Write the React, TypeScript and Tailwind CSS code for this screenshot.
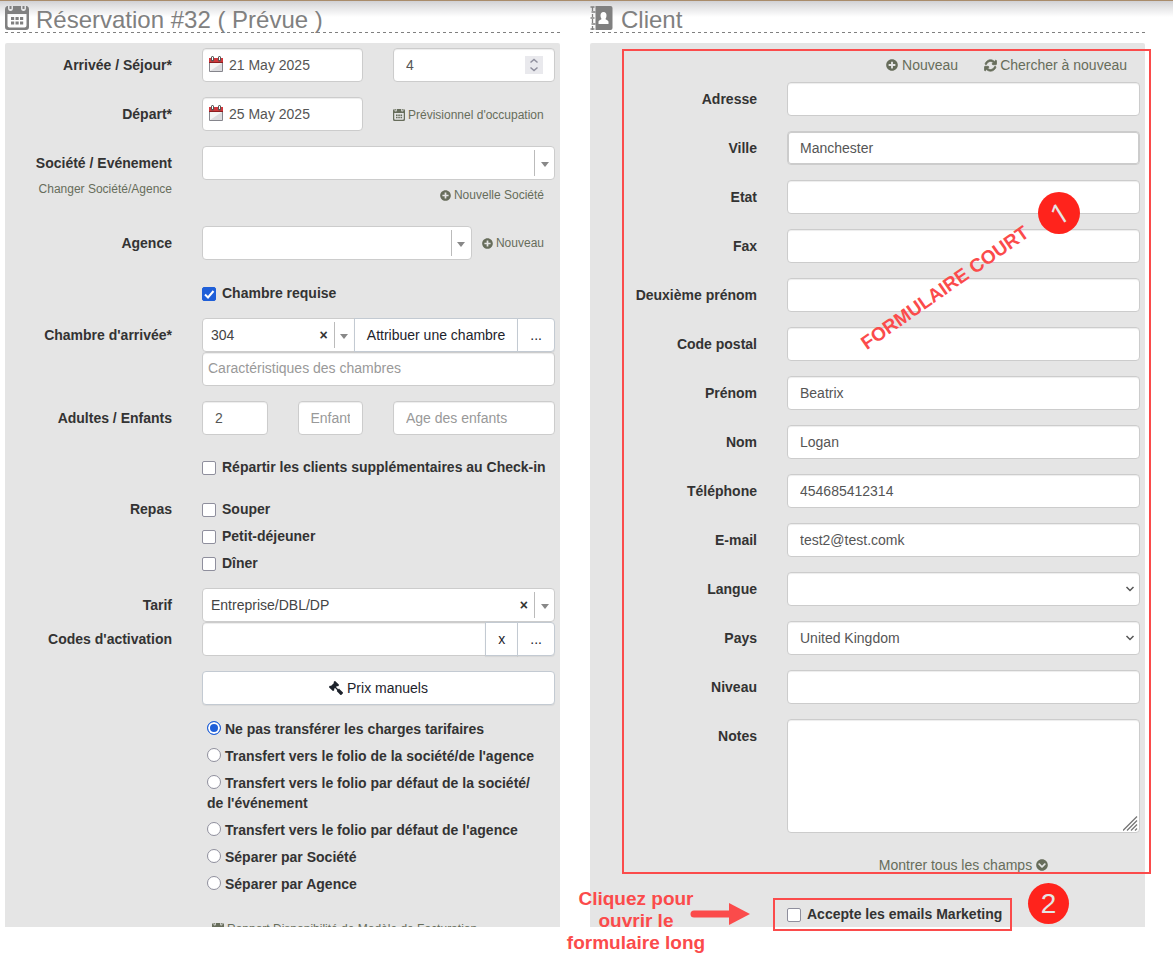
import { useState, type ReactNode } from "react";
import { FaGavel, FaPlusCircle, FaChevronCircleDown } from "react-icons/fa";
import { FaArrowsRotate } from "react-icons/fa6";

const inputBox =
  "h-[34px] w-full min-w-0 rounded border border-[#ccc] bg-white px-3 text-sm text-[#555] shadow-[inset_0_1px_1px_rgba(0,0,0,0.075)] outline-none placeholder:text-[#999]";
const linkStyle = "text-[#676d5b] hover:underline";
const buttonStyle =
  "h-[34px] shrink-0 border border-[#c3cad2] bg-white px-3 text-sm text-[#1d232c] shadow-[0_1px_1px_rgba(0,0,0,0.06)] hover:bg-gray-50";

function CalendarIcon({ className }: { className?: string }) {
  return (
    <svg viewBox="0 0 24 24" className={className} fill="currentColor" aria-hidden="true">
      <path
        fillRule="evenodd"
        d="M0 3q0-2 2-3h1v2q0 3 2.500 3t2.500-3V0h8v2q0 3 2.500 3T21 2V0h1q2 1 2 3v18q0 3-3 3H3q-3 0-3-3zM2.500 8v11.500q0 2 2 2h15q2 0 2-2V8z"
      />
      <path d="M4.500 0h2v3h-2zM17.500 0h2v3h-2z" />
      <path d="M6 11h3.200v3H6zM10.500 11h3.200v3h-3.200zM15 11h3.200v3H15zM6 15.500h3.200v3H6zM10.500 15.500h3.200v3h-3.200zM15 15.500h3.200v3H15z" />
    </svg>
  );
}

function AddressBookIcon({ className }: { className?: string }) {
  return (
    <svg viewBox="0 0 22 24" className={className} aria-hidden="true">
      <path d="M5 0h15q2 0 2 2v20q0 2-2 2H5z" fill="#808080" />
      <path
        d="M2 1v4M2 8v3M2 13v4M2 20v4M0 1h4M1 6h4M0 12h4M1 18h4M0 23h4"
        stroke="#808080"
        strokeWidth="1.300"
        fill="none"
      />
      <path
        d="M13 6c2 0 3 1.500 3 3.500 0 1.500-.5 2.500-1 3.300 0 1.200 3 1.200 3 3.200v2H8v-2c0-2 3-2 3-3.200-.5-.8-1-1.800-1-3.300C10 7.500 11 6 13 6z"
        fill="#fff"
      />
    </svg>
  );
}

function DatePickerIcon() {
  return (
    <svg viewBox="0 0 14 18" className="h-[18px] w-3.5 shrink-0" aria-hidden="true">
      <path d="M.5 6.500h13v9H.5z" fill="#f5f5f5" stroke="#85858c" />
      <path d="M1 15L13 7v8z" fill="#dcdcdf" />
      <path d="M0 2h14v5H0z" fill="#d0393d" />
      <path d="M0 6h14v1H0z" fill="#8d1d20" />
      <path d="M3.500 4V1.500M10.500 4V1.500" stroke="#555" strokeWidth="3" strokeLinecap="round" />
      <path d="M3.500 4V1M10.500 4V1" stroke="#fff" strokeWidth="1" />
    </svg>
  );
}

function Row({ label, htmlFor, children }: { label?: ReactNode; htmlFor?: string; children: ReactNode }) {
  return (
    <div className="grid grid-cols-[167px_minmax(0,1fr)] gap-x-[30px] pr-[5px]">
      <div className="pt-[7px] text-right leading-5">
        {label && (
          <label htmlFor={htmlFor} className="font-bold">
            {label}
          </label>
        )}
      </div>
      <div className="min-w-0">{children}</div>
    </div>
  );
}

function DateInput({ id, value }: { id: string; value: string }) {
  return (
    <div className={`${inputBox} flex items-center gap-1.5 px-1.5!`}>
      <DatePickerIcon />
      <input id={id} defaultValue={value} className="w-full min-w-0 outline-none" />
    </div>
  );
}

interface ComboProps {
  id: string;
  value?: string;
  className?: string;
}

function Combo({ id, value = "", className = "" }: ComboProps) {
  const [selected, setSelected] = useState(value);

  return (
    <div className={`flex h-[34px] min-w-0 items-center rounded border border-[#ccc] bg-white ${className}`}>
      <select
        id={id}
        value={selected}
        onChange={(e) => setSelected(e.target.value)}
        className="h-8 min-w-0 flex-1 appearance-none pl-2 text-[#444] outline-none"
      >
        <option value=""></option>
        {value && <option value={value}>{value}</option>}
      </select>
      {selected && (
        <button type="button" aria-label="Effacer" onClick={() => setSelected("")} className="px-1.5 font-bold text-[#333]">
          ×
        </button>
      )}
      <div className="flex h-[26px] w-5 items-center justify-center border-l border-[#bbb] pt-0.5">
        <svg viewBox="0 0 8 5" className="h-[5px] w-2" aria-hidden="true">
          <path d="M0 0h8L4 5z" fill="#888" />
        </svg>
      </div>
    </div>
  );
}

function CheckMark({ id, label, checked = false }: { id: string; label: string; checked?: boolean }) {
  return (
    <div className="flex items-center gap-1.5 leading-5">
      <span className="grid pt-0.5">
        <input
          id={id}
          type="checkbox"
          defaultChecked={checked}
          className="peer col-start-1 row-start-1 size-3.5 appearance-none rounded-xs border border-[#8f8f9d] bg-white checked:border-[#1f5fd8] checked:bg-[#1f5fd8]"
        />
        <svg
          viewBox="0 0 14 14"
          className="pointer-events-none col-start-1 row-start-1 hidden size-3.5 peer-checked:block"
          aria-hidden="true"
        >
          <path d="M3 7.500L6 10.500L11.500 4" fill="none" stroke="#fff" strokeWidth="2" />
        </svg>
      </span>
      <label htmlFor={id} className="font-bold">
        {label}
      </label>
    </div>
  );
}

const transferOptions = [
  "Ne pas transférer les charges tarifaires",
  "Transfert vers le folio de la société/de l'agence",
  "Transfert vers le folio par défaut de la société/ de l'événement",
  "Transfert vers le folio par défaut de l'agence",
  "Séparer par Société",
  "Séparer par Agence",
];

const clientFields = [
  { id: "adresse", label: "Adresse", value: "" },
  { id: "ville", label: "Ville", value: "Manchester", active: true },
  { id: "etat", label: "Etat", value: "" },
  { id: "fax", label: "Fax", value: "" },
  { id: "deuxieme", label: "Deuxième prénom", value: "" },
  { id: "postal", label: "Code postal", value: "" },
  { id: "prenom", label: "Prénom", value: "Beatrix" },
  { id: "nom", label: "Nom", value: "Logan" },
  { id: "telephone", label: "Téléphone", value: "454685412314" },
  { id: "email", label: "E-mail", value: "test2@test.comk" },
];

function Title({ icon, children }: { icon: ReactNode; children: ReactNode }) {
  return (
    <h2 className="mb-2.5 flex h-7 items-start gap-[7px] bg-[repeating-linear-gradient(90deg,#808080_0_3px,transparent_3px_6px)] bg-[length:100%_1px] bg-bottom bg-no-repeat text-2xl leading-[30px] text-[#808080]">
      {icon}
      <span>{children}</span>
    </h2>
  );
}

function ClientSelect({ id, value }: { id: string; value: string }) {
  return (
    <div className={`${inputBox} flex items-center px-0!`}>
      <select id={id} defaultValue={value} className="h-8 w-full appearance-none pl-3 outline-none">
        <option value={value}>{value}</option>
      </select>
      <svg viewBox="0 0 10 6" className="mr-1 h-1.5 w-2.5 shrink-0" aria-hidden="true">
        <path d="M1.500 1L5 4.500 8.500 1" fill="none" stroke="#555" strokeWidth="1.500" />
      </svg>
    </div>
  );
}

function Reservation() {
  return (
    <section>
      <Title icon={<CalendarIcon className="mt-px size-6" />}>Réservation #32 ( Prévue )</Title>
      <form className="rounded-t-xs bg-[#e5e5e5] pt-[5px]">
        <div className="flex flex-col gap-[15px]">
          <Row label="Arrivée / Séjour*" htmlFor="arrivee">
            <div className="grid grid-cols-[161fr_162fr] gap-[30px]">
              <DateInput id="arrivee" value="21 May 2025" />
              <div className={`${inputBox} flex items-center px-[11px]!`}>
                <input aria-label="Séjour" defaultValue="4" className="w-full min-w-0 pl-px outline-none" />
                <svg viewBox="0 0 18 18" className="size-[18px] shrink-0" aria-hidden="true">
                  <path d="M0 0h18v18H0z" fill="#e9e9ed" />
                  <path d="M5.500 6.500L9 3.500l3.500 3M5.500 11.500L9 14.500l3.500-3" fill="none" stroke="#8f8f9d" strokeWidth="1.500" />
                </svg>
              </div>
            </div>
          </Row>
          <Row label="Départ*" htmlFor="depart">
            <div className="grid grid-cols-[161fr_162fr] items-center gap-[30px]">
              <DateInput id="depart" value="25 May 2025" />
              <a href="#" className={`${linkStyle} flex items-center gap-[3px] pt-px text-xs whitespace-nowrap`}>
                <CalendarIcon className="size-3" />
                Prévisionnel d'occupation
              </a>
            </div>
          </Row>
        </div>

        <div className="mt-[15px] grid grid-cols-[167px_minmax(0,1fr)] gap-x-[30px] pr-[5px]">
          <div className="pt-[7px] text-right leading-5">
            <label htmlFor="societe" className="block font-bold">
              Société / Evénement
            </label>
            <a href="#" className={`${linkStyle} mt-1.5 block text-xs leading-5`}>
              Changer Société/Agence
            </a>
          </div>
          <div>
            <Combo id="societe" />
            <a href="#" className={`${linkStyle} mt-[5px] flex items-center justify-end gap-[3px] pr-[11px] text-xs leading-5`}>
              <FaPlusCircle className="size-[11px]" />
              Nouvelle Société
            </a>
          </div>
        </div>

        <div className="mt-[21px]">
          <Row label="Agence" htmlFor="agence">
            <div className="flex items-center gap-2.5">
              <Combo id="agence" className="flex-1" />
              <a href="#" className={`${linkStyle} flex items-center gap-[3px] pr-[11px] text-xs`}>
                <FaPlusCircle className="size-[11px]" />
                Nouveau
              </a>
            </div>
          </Row>
        </div>

        <div className="mt-[23px]">
          <Row>
            <CheckMark id="requise" label="Chambre requise" checked />
          </Row>
        </div>

        <div className="mt-[15px]">
          <Row label="Chambre d'arrivée*" htmlFor="chambre">
            <div className="flex">
              <Combo id="chambre" value="304" className="flex-1 rounded-r-none" />
              <button type="button" className={`${buttonStyle} -ml-px`}>
                Attribuer une chambre
              </button>
              <button type="button" className={`${buttonStyle} -ml-px rounded-r`}>
                ...
              </button>
            </div>
            <input
              aria-label="Caractéristiques des chambres"
              placeholder="Caractéristiques des chambres"
              className={`${inputBox} px-[5px]! pb-0.5`}
            />
          </Row>
        </div>

        <div className="mt-[15px]">
          <Row label="Adultes / Enfants" htmlFor="adultes">
            <div className="grid grid-cols-[161fr_162fr] gap-[30px]">
              <div className="grid grid-cols-2 gap-[30px]">
                <input id="adultes" defaultValue="2" className={inputBox} />
                <input aria-label="Enfants" placeholder="Enfants" className={inputBox} />
              </div>
              <input aria-label="Age des enfants" placeholder="Age des enfants" className={inputBox} />
            </div>
          </Row>
        </div>

        <div className="mt-[22px]">
          <Row>
            <CheckMark id="repartir" label="Répartir les clients supplémentaires au Check-in" />
          </Row>
        </div>

        <div className="mt-[15px]">
          <Row label="Repas">
            <div className="flex flex-col gap-[7px] pt-[7px]">
              <CheckMark id="souper" label="Souper" />
              <CheckMark id="petit-dejeuner" label="Petit-déjeuner" />
              <CheckMark id="diner" label="Dîner" />
            </div>
          </Row>
        </div>

        <div className="mt-[15px]">
          <Row label="Tarif" htmlFor="tarif">
            <Combo id="tarif" value="Entreprise/DBL/DP" />
          </Row>
          <Row label="Codes d'activation" htmlFor="codes">
            <div className="flex">
              <input id="codes" className={`${inputBox} rounded-r-none`} />
              <button type="button" className={`${buttonStyle} -ml-px`}>
                x
              </button>
              <button type="button" className={`${buttonStyle} -ml-px rounded-r`}>
                ...
              </button>
            </div>
          </Row>
        </div>

        <div className="mt-[15px]">
          <Row>
            <button type="button" className={`${buttonStyle} flex w-full items-center justify-center gap-1 rounded`}>
              <FaGavel className="size-3.5 -scale-x-100" />
              Prix manuels
            </button>
          </Row>
        </div>

        <div className="mt-[7px]">
          <Row>
            <div className="pr-2 pl-[5px]">
              {transferOptions.map((option, idx) => (
                <label key={option} className="block pt-[7px] leading-5 font-bold">
                  <input
                    type="radio"
                    name="transfert"
                    defaultChecked={idx === 0}
                    className="mr-1 size-3.5 appearance-none rounded-full border border-[#8f8f9d] bg-white align-[-1px] checked:border-[#1f5fd8] checked:bg-[#1f5fd8] checked:shadow-[inset_0_0_0_2px_#fff]"
                  />
                  {option}
                </label>
              ))}
            </div>
          </Row>
        </div>

        <div className="mt-6 h-[9px] overflow-hidden">
          <div className="grid grid-cols-[167px_minmax(0,1fr)] gap-x-[30px]">
            <span className="pt-1.5 text-right leading-5 font-bold">Catégories</span>
            <a href="#" className={`${linkStyle} flex h-[22px] items-center gap-[3px] pl-2.5 text-xs`}>
              <CalendarIcon className="size-3" />
              Rapport Disponibilité de Modèle de Facturation
            </a>
          </div>
        </div>
      </form>
    </section>
  );
}

function Client() {
  return (
    <section>
      <Title icon={<AddressBookIcon className="mt-px mr-px h-6 w-[23px]" />}>Client</Title>
      <div className="relative">
        <form className="rounded-t-xs bg-[#e5e5e5] pt-3 pb-[3px]">
          <div className="flex justify-end gap-[26px] pr-[18px] leading-5">
            <a href="#" className={`${linkStyle} flex items-center gap-1`}>
              <FaPlusCircle className="size-3" />
              Nouveau
            </a>
            <a href="#" className={`${linkStyle} flex items-center gap-[3px]`}>
              <FaArrowsRotate className="size-[13px]" strokeWidth="30" stroke="currentColor" />
              Chercher à nouveau
            </a>
          </div>

          <div className="mt-[7px] flex flex-col gap-[15px]">
            {clientFields.map((field) => (
              <Row key={field.id} label={field.label} htmlFor={field.id}>
                <input
                  id={field.id}
                  defaultValue={field.value}
                  className={`${inputBox} block ${field.active ? "ring-1 ring-[#ccc] ring-inset" : ""}`}
                />
              </Row>
            ))}
            <Row label="Langue" htmlFor="langue">
              <ClientSelect id="langue" value="" />
            </Row>
            <Row label="Pays" htmlFor="pays">
              <ClientSelect id="pays" value="United Kingdom" />
            </Row>
            <Row label="Niveau" htmlFor="niveau">
              <input id="niveau" className={`${inputBox} block`} />
            </Row>
            <Row label="Notes" htmlFor="notes">
              <div className="relative">
                <textarea id="notes" className={`${inputBox} block h-[114px]! resize-none py-1.5`} />
                <svg viewBox="0 0 15 15" className="pointer-events-none absolute right-0.5 bottom-0.5 size-[15px]" aria-hidden="true">
                  <path d="M0 14.500L14 .5M4 14.500L14 4.500M8 14.500l6-6M12 14.500l2-2" stroke="#777" strokeWidth="1.300" />
                </svg>
              </div>
            </Row>
          </div>

          <div className="mt-[22px]">
            <Row>
              <a href="#" className={`${linkStyle} flex items-center justify-center gap-1 leading-5`}>
                Montrer tous les champs
                <FaChevronCircleDown className="size-3" />
              </a>
            </Row>
          </div>

          <div className="mt-[22px]">
            <Row>
              <div className="pt-[7px]">
                <CheckMark id="marketing" label="Accepte les emails Marketing" />
              </div>
            </Row>
          </div>
        </form>

        {/* Callouts */}
        <div className="pointer-events-none absolute top-[6px] -right-[6px] left-8 h-[825px] border-2 border-[#fb4b4b]" />
        <div className="pointer-events-none absolute top-[855px] left-[183px] h-[33px] w-[239px] border-2 border-[#fb4b4b]" />
        <div className="pointer-events-none absolute top-[149px] left-[448px] flex size-[42px] items-center justify-center rounded-full bg-[#ff231c]">
          <span className="-rotate-[32deg] font-['Open_Sans',sans-serif] text-[28px] leading-none text-[#e5e5e5]">1</span>
        </div>
        <div className="pointer-events-none absolute top-[840px] left-[438px] flex size-[41px] items-center justify-center rounded-full bg-[#ff231c]">
          <span className="text-[28px] leading-none text-[#e5e5e5]">2</span>
        </div>
        <p className="pointer-events-none absolute top-[233px] left-[255px] w-[200px] -rotate-[35deg] text-center text-[19px] leading-6 font-bold whitespace-nowrap text-[#fb4b4b]">
          FORMULAIRE COURT
        </p>
        <p className="pointer-events-none absolute top-[845px] -left-[34px] w-40 text-center text-[19px] leading-[22px] font-bold text-[#fb4b4b]">
          Cliquez pour
          <br />
          ouvrir le
          <br />
          formulaire long
        </p>
        <svg viewBox="0 0 60 22" className="pointer-events-none absolute top-[860px] left-[100px] h-[22px] w-[60px]" aria-hidden="true">
          <path d="M4 11h40" stroke="#fb4b4b" strokeWidth="7" strokeLinecap="round" />
          <path d="M39 0l21 11-21 11z" fill="#fb4b4b" />
        </svg>
      </div>
    </section>
  );
}

export default function App() {
  return (
    <div className="min-h-screen bg-white font-['Liberation_Sans',Arial,sans-serif] text-sm text-[#333]">
      <div className="h-[5px] border-t border-[#a98c6b] bg-linear-to-b from-[#d0d0d4] to-[#dedee0]" />
      <main className="grid grid-cols-2 gap-[30px] bg-linear-to-b from-[#dedee0] to-white bg-[length:100%_12px] bg-no-repeat pr-7 pl-[5px]">
        <Reservation />
        <Client />
      </main>
    </div>
  );
}
